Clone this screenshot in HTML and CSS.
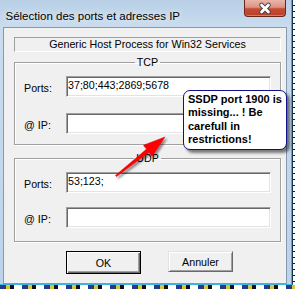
FILE: index.html
```html
<html>

<head>
  <link rel="stylesheet" href="styles.css">
</head>

<body>
  <div class="window">
    <div class="titlebar">
      <span class="title">Sélection des ports et adresses IP</span>
      <div class="close">
        <svg width="40" height="16" viewBox="0 0 40 16">
          <path d="M16.5 5 L23.5 12 M23.5 5 L16.5 12" stroke="#4a4a4a" stroke-width="4.6" stroke-linecap="round" />
          <path d="M16.5 5 L23.5 12 M23.5 5 L16.5 12" stroke="#fff" stroke-width="2.6" stroke-linecap="round" />
        </svg>
      </div>
    </div>

    <div class="client">
      <div class="process">Generic Host Process for Win32 Services</div>

      <fieldset class="group tcp">
        <legend>TCP</legend>
        <div class="rows">
          <div class="row"><label>Ports:</label><input value="37;80;443;2869;5678"></div>
          <div class="row"><label>@ IP:</label><input value=""></div>
        </div>
      </fieldset>

      <fieldset class="group udp">
        <legend>UDP</legend>
        <div class="rows">
          <div class="row"><label>Ports:</label><input value="53;123;"></div>
          <div class="row"><label>@ IP:</label><input value=""></div>
        </div>
      </fieldset>

      <div class="buttons">
        <button class="btn btn-default">OK</button>
        <button class="btn">Annuler</button>
      </div>
    </div>
  </div>
  <div class="desk"></div>

  <div class="balloon">SSDP port 1900 is missing... ! Be carefull in restrictions!</div>

  <svg class="arrow" viewBox="0 0 295 289">
    <defs>
      <filter id="shadow" x="-20%" y="-20%" width="140%" height="140%">
        <feDropShadow dx="2" dy="2" stdDeviation="1.2" flood-color="#000" flood-opacity="0.45" />
      </filter>
    </defs>
    <polygon filter="url(#shadow)" fill="#ff0000" stroke="#d00000" stroke-width="0.5"
      points="115.5,175.4 146.6,149.1 143.5,145.2 165,137 152.1,156.2 149,152.3 116.5,176.6" />
  </svg>
</body>

</html>
```

FILE: styles.css
```css
body {
  margin: 0;
  width: 295px;
  height: 289px;
  overflow: hidden;
  background: repeating-linear-gradient(#fff 0 5px, #1a1a1a 5px 6px);
  font-family: "Liberation Sans", Arial, sans-serif;
}

.window {
  width: 293px;
  height: 285px;
  box-sizing: border-box;
  padding: 0 5px 0 3px;
  background: linear-gradient(#b8cfe6, #cadcee 27px, #bcd3ea);
  border-right: 1px solid #173852;
  border-bottom: 1px solid #3ab3e3;
  box-shadow: inset -1px 0 #3ab3e3;
  display: flex;
  flex-direction: column;
}

.titlebar {
  height: 27px;
  flex-shrink: 0;
  display: flex;
  align-items: flex-start;
}

.title {
  padding: 8.5px 0 0 2.5px;
  font-size: 11.5px;
  line-height: 14px;
  color: #000;
  text-shadow: 0 0 6px #fff;
}

.close {
  margin-left: auto;
  margin-right: 1px;
  width: 42px;
  height: 17px;
  box-sizing: border-box;
  border: 1px solid #6b2418;
  border-top: none;
  border-radius: 0 0 4px 4px;
  background: linear-gradient(#ebb5a9 0%, #dc9484 45%, #c84b33 55%, #b83f2a 100%);
  box-shadow: inset 0 -1px #d97a64;
}

.close svg {
  display: block;
}

.client {
  flex: 1;
  background: #f0f0f0;
  border: 1px solid #8799ad;
  padding: 9px 5px 0 10px;
  display: flex;
  flex-direction: column;
}

.process {
  height: 15px;
  box-sizing: border-box;
  border: 1px solid;
  border-color: #a0a0a0 #fff #fff #a0a0a0;
  text-align: center;
  font-size: 10.7px;
  line-height: 13px;
  margin-bottom: 4px;
}

.group {
  margin: 0;
  min-width: 0;
  padding: 7px 9px 10px 9px;
  border: 1px solid #a0a0a0;
  box-shadow: inset 1px 1px #fff, 1px 1px #fff;
}

.group legend {
  margin: 0 auto;
  padding: 0 2px;
  font-size: 10.7px;
  line-height: 13px;
}

.udp {
  margin-top: 7px;
  padding-bottom: 13px;
}

.rows {
  display: flex;
  flex-direction: column;
  gap: 16px;
}

.udp .rows {
  gap: 14px;
}

.row {
  display: flex;
  align-items: flex-start;
}

.row label {
  width: 42px;
  flex-shrink: 0;
  padding-top: 5.5px;
  font-size: 10.7px;
  line-height: 13px;
}

.row input {
  flex: 1;
  min-width: 0;
  height: 21px;
  box-sizing: border-box;
  margin: 0;
  padding: 0 1px 4px 1px;
  border: 1px solid;
  border-color: #a0a0a0 #fff #fff #a0a0a0;
  box-shadow: inset 1px 1px #696969, inset -1px -1px #e3e3e3;
  background: #fff;
  font-family: "Liberation Sans", Arial, sans-serif;
  font-size: 10.7px;
  line-height: 13px;
  color: #000;
  outline: none;
}

.buttons {
  display: flex;
  align-items: flex-start;
  gap: 27px;
  margin-top: 9px;
  padding-left: 52px;
}

.btn {
  width: 65px;
  height: 21px;
  margin: 0;
  padding: 0;
  background: #f0f0f0;
  border: 1px solid;
  border-color: #e3e3e3 #696969 #696969 #e3e3e3;
  box-shadow: inset 1px 1px #fff, inset -1px -1px #a0a0a0;
  font-family: "Liberation Sans", Arial, sans-serif;
  font-size: 10.7px;
  color: #000;
}

.btn-default {
  width: 75px;
  height: 23px;
  border: 1px solid #000;
  box-shadow: inset 1px 1px #fff, inset -1px -1px #696969, inset -2px -2px #a0a0a0;
}

.desk {
  height: 4px;
  background: repeating-linear-gradient(90deg, #1d3f8a 0 6px, #e2c23a 6px 10px, #111 10px 14px, #fff 14px 22px);
}

.balloon {
  position: absolute;
  left: 183px;
  top: 90px;
  width: 104px;
  height: 60px;
  box-sizing: border-box;
  padding: 1.5px 2px 0 4px;
  background: #fff;
  border: 1px solid #10108a;
  border-radius: 7px;
  box-shadow: 3px 3px 3px rgba(0, 0, 0, 0.5);
  font-size: 11px;
  font-weight: bold;
  line-height: 13.5px;
  color: #000;
}

.arrow {
  position: absolute;
  left: 0;
  top: 0;
  width: 295px;
  height: 289px;
  pointer-events: none;
}
```
